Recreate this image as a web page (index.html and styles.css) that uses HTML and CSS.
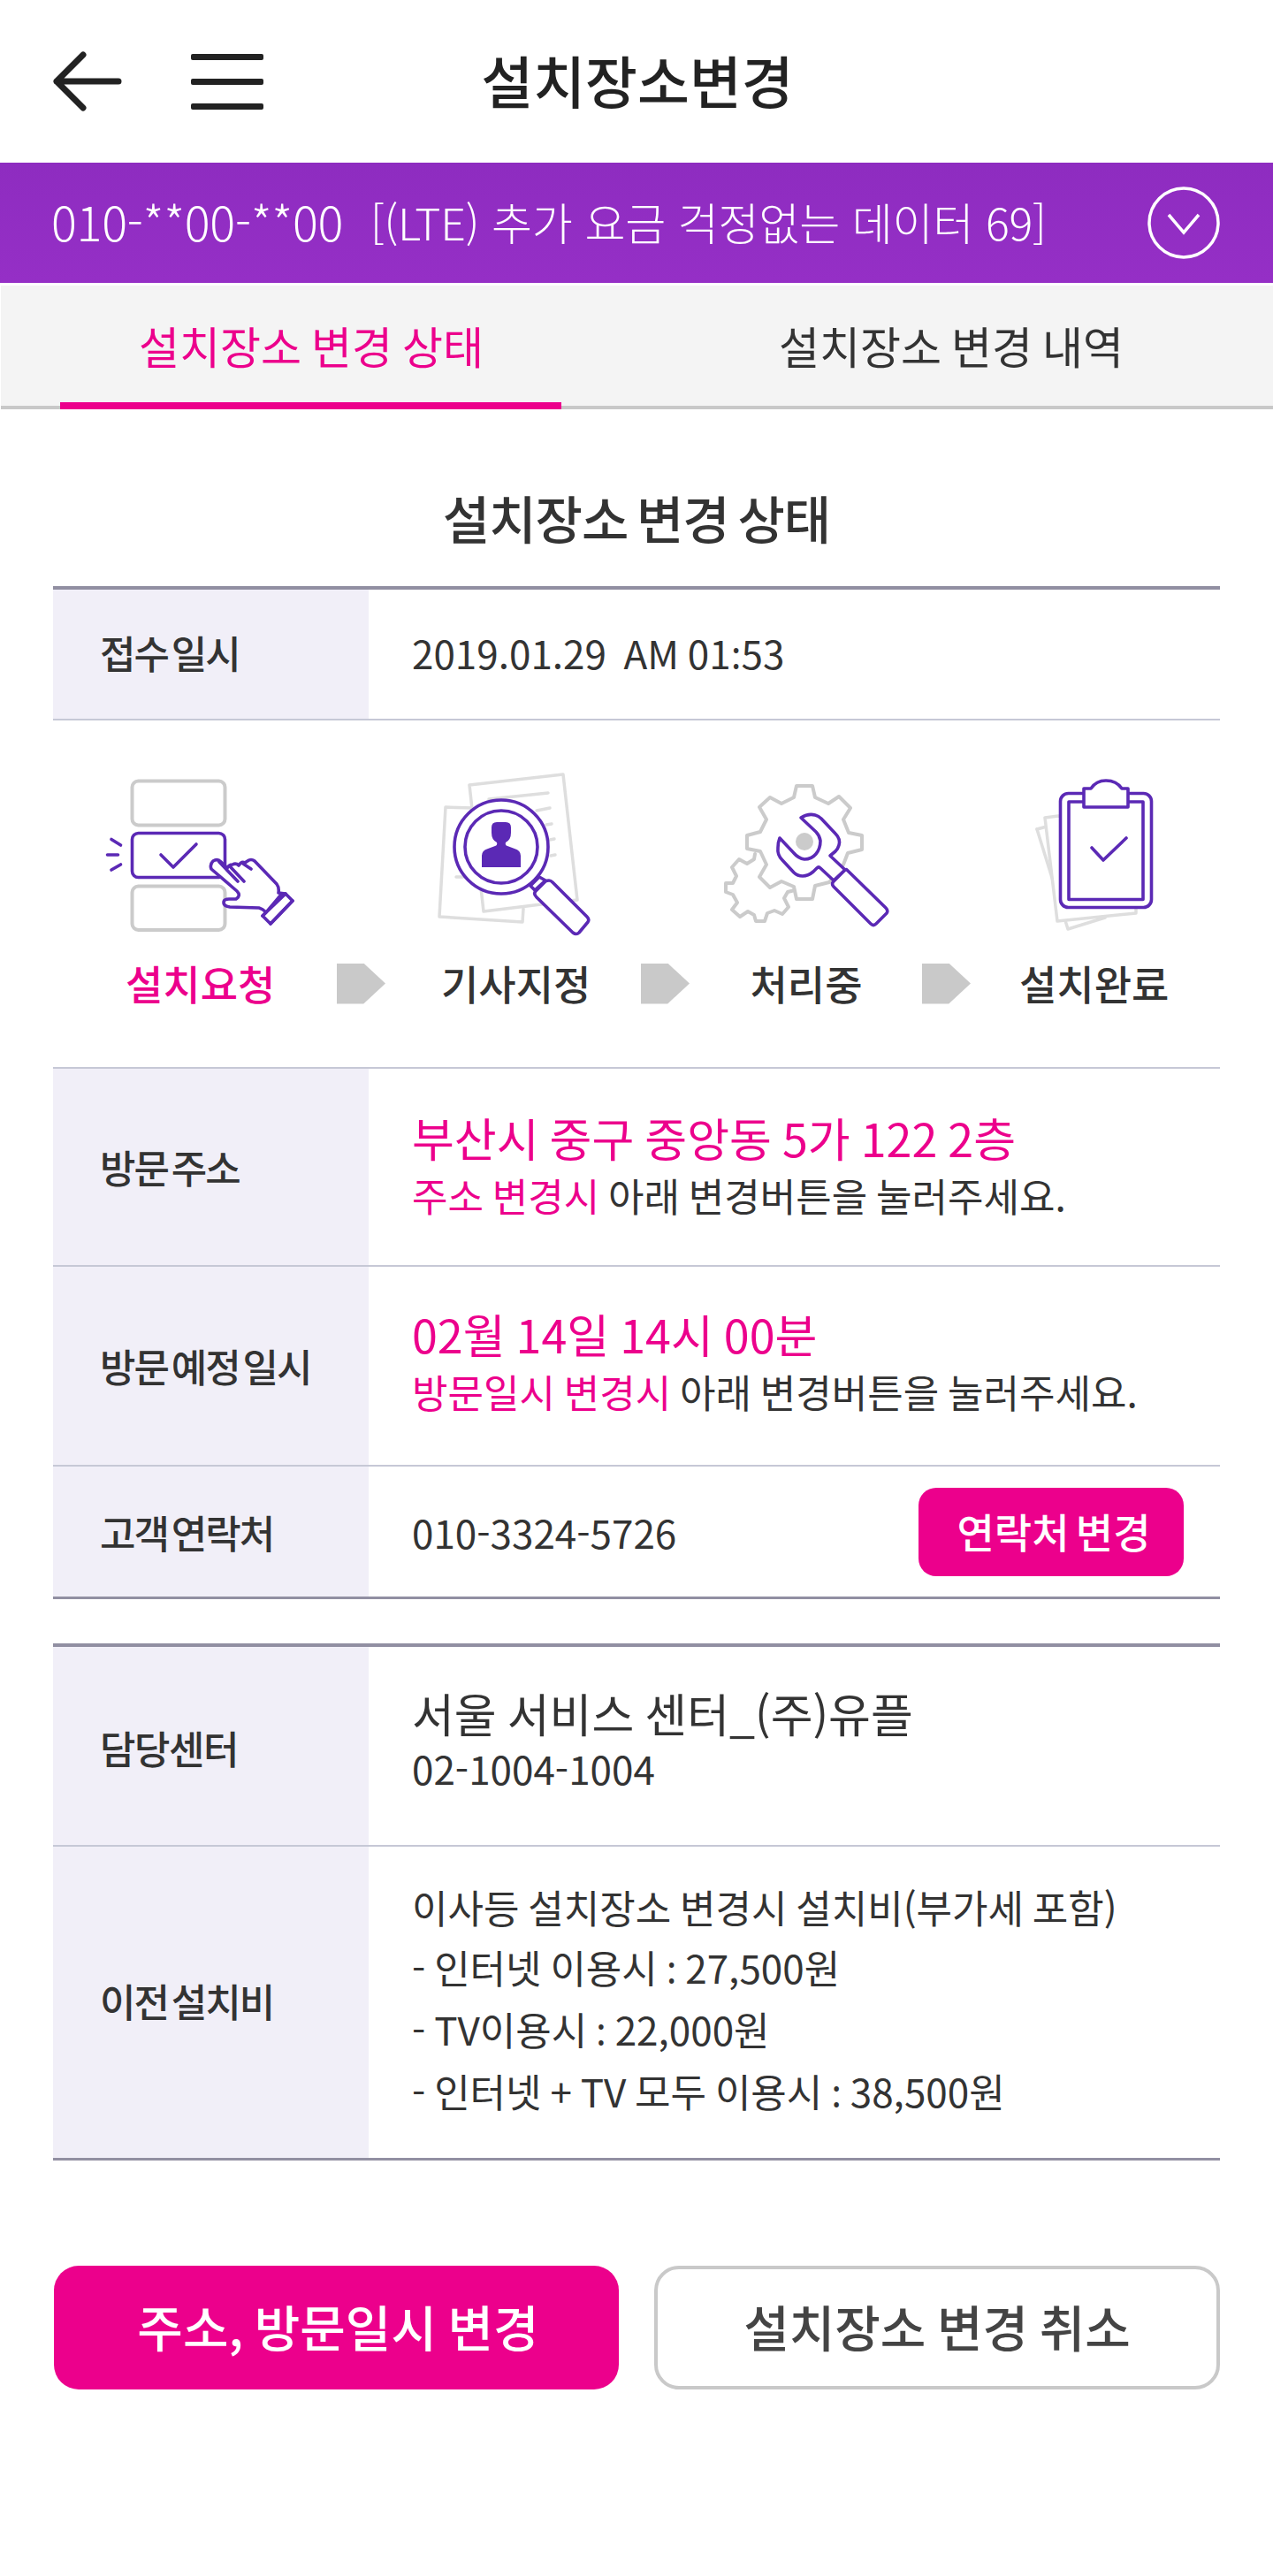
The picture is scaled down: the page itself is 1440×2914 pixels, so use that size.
FILE: index.html
```html
<!DOCTYPE html>
<html lang="ko">
<head>
<meta charset="utf-8">
<title>설치장소변경</title>
<link rel="stylesheet" href="styles.css">
</head>
<body>
<header class="topbar">
  <svg class="ico-back" viewBox="0 0 82 72"><path d="M76 36H6M36 6L6 36L36 66"/></svg>
  <svg class="ico-menu" viewBox="0 0 82 63"><rect y="0" width="82" height="7" rx="2"/><rect y="28" width="82" height="7" rx="2"/><rect y="56" width="82" height="7" rx="2"/></svg>
  <h1 class="page-title">설치장소변경</h1>
</header>
<div class="planbar">
  <span class="plan-num">010-**00-**00</span>
  <span class="plan-name">[(LTE) 추가 요금 걱정없는 데이터 69]</span>
  <svg class="ico-down" viewBox="0 0 82 82"><circle cx="41" cy="41" r="39"/><path d="M24 32L41 52L58 32"/></svg>
</div>
<nav class="tabs">
  <a class="tab tab-on">설치장소 변경 상태</a>
  <a class="tab tab-off">설치장소 변경 내역</a>
</nav>
<main class="content">
  <h2 class="sec-title">설치장소 변경 상태</h2>

  <section class="table">
    <div class="row row-date">
      <div class="th">접수 일시</div>
      <div class="td"><span>2019.01.29&nbsp; AM 01<span class="colon">:</span>53</span></div>
    </div>
    <div class="steps">
      <div class="step-icons">
        <svg class="si si1" viewBox="0 0 230 190">
          <g class="g-line">
            <rect x="39.5" y="13.5" width="105" height="50" rx="7"/>
            <rect x="39.5" y="132.5" width="105" height="49.5" rx="7"/>
          </g>
          <g class="p-line">
            <rect x="39.5" y="72.5" width="105" height="50" rx="7"/>
            <path d="M72 97L86 111L112 85M16 79.5L26.5 86M11.5 97H23.5M16 114L26.5 108"/>
            <path class="fw" d="M129 113Q127 108 131 104Q136 101 140 105L147 112Q149 108 153 108Q157 106 160 109Q163 104 167 106L170 104Q174 101 178 104L203 130Q206 134 205 140L213 141L221 149L196 175L187 166L191 162Q187 158 183 157L150 156Q143 155 143 151Q143 147 149 147L157 147Q163 143 158 138Z"/>
            <path d="M138 105L159 127M150 110L166 127M165 107L174 113M208 142L192 161M213 141L187 166M196 175L221 149"/>
          </g>
        </svg>
        <svg class="si si2" viewBox="0 0 190 190">
          <g class="lg-line">
            <path d="M45 44L14 43L7 167L101 173L102 158"/>
            <path class="fw" d="M41 18L147 6L163 148L57 161Z"/>
            <path d="M63 34L130 27M117 47L132 44M128 63L134 62M132 80L137 79M133 98L138 97M26 122H34"/>
          </g>
          <g class="p-line">
            <path class="fw" d="M120 122L110 132L115 137L127 126Z"/>
            <circle class="fw" cx="77" cy="88" r="53"/>
            <circle cx="77" cy="88" r="41"/>
            <path class="fw" d="M131 126Q133 126 135 128L174 167Q177 170 175 173L165 185Q162 188 158 185L117 145Q113 141 116 138L127 127Q129 126 131 126Z"/>
          </g>
          <path class="p-fill" d="M55 111V98Q55 92 62 90L70 87Q73 86 72 83Q66 80 66 72V66Q66 60 72 60H82Q88 60 88 66V72Q88 80 82 83Q81 86 84 87L92 90Q99 92 99 98V111Z"/>
        </svg>
        <svg class="si si3" viewBox="0 -5 200 190">
          <g class="g-line">
            <path d="M44 91L43 97L35 102L26 97L18 106L23 116L19 124L11 124V134L19 137L24 146L18 154L27 162L36 156L43 160L45 167H55L58 158L66 155L75 159L82 151L77 141L81 134L89 132"/>
            <path class="fw" d="M88 27L91 14H109L112 27L127 34L139 26L152 39L144 52L150 67L165 70V86L149 90L144 103L128 123L112 127L109 142H91L88 128L74 122L61 129L49 117L57 103L50 88L35 85V70L50 66L57 52L49 38L61 27L74 34Z"/>
          </g>
          <circle class="g-fill" cx="100" cy="77" r="10"/>
          <path class="p-line fw" d="M96 50Q104 45 112 47Q116 48 119 51L135 68Q141 74 139 81Q138 85 135 88L129 93L146 109L133 121L118 107Q116 105 114 107L110 111Q104 116 98 116Q92 116 88 112L75 98Q69 92 70 84Q70 78 72 73L88 90Q93 96 100 97Q108 97 113 91Q118 85 118 76Q117 70 113 66Z"/>
          <path class="p-line fw" d="M148 109L192 152Q195 155 193 158L181 170Q178 173 175 170L133 128Q130 125 133 122L145 110Q147 108 148 109Z"/>
        </svg>
        <svg class="si si4" viewBox="0 0 170 190">
          <g class="lg-line">
            <path d="M13 68L48 181L90 168"/>
            <path d="M13 68L24 65"/>
            <path class="fw" d="M22 55L37 53L125 70V163L36 172Z"/>
          </g>
          <g class="p-line">
            <rect class="fw" x="39.5" y="27.5" width="103" height="129" rx="9"/>
            <rect x="49" y="37" width="84" height="110.500"/>
            <path class="fw" d="M66 43V22H74Q80 13 91 13Q103 13 109 22H116V43Z"/>
            <path d="M75 89L88 103L114 78"/>
          </g>
        </svg>
      </div>
      <div class="step-labels">
        <span class="sl sl-on">설치요청</span>
        <i class="arw arw1"></i>
        <span class="sl">기사지정</span>
        <i class="arw arw2"></i>
        <span class="sl sl-3">처리중</span>
        <i class="arw arw3"></i>
        <span class="sl">설치완료</span>
      </div>
    </div>
    <div class="row row-addr">
      <div class="th">방문 주소</div>
      <div class="td">
        <p class="big pink">부산시 중구 중앙동 5가 122 2층</p>
        <p class="note"><span class="pink">주소 변경시</span> 아래 변경버튼을 눌러주세요.</p>
      </div>
    </div>
    <div class="row row-date2">
      <div class="th">방문 예정 일시</div>
      <div class="td">
        <p class="big pink">02월 14일 14시 00분</p>
        <p class="note"><span class="pink">방문일시 변경시</span> 아래 변경버튼을 눌러주세요.</p>
      </div>
    </div>
    <div class="row row-tel row-last">
      <div class="th">고객 연락처</div>
      <div class="td td-split">
        <span>010-3324-5726</span>
        <a class="mini-btn">연락처 변경</a>
      </div>
    </div>
  </section>

  <section class="table table-2">
    <div class="row row-center">
      <div class="th">담당센터</div>
      <div class="td">
        <p class="big">서울 서비스 센터_(주)유플</p>
        <p class="tel">02-1004-1004</p>
      </div>
    </div>
    <div class="row row-fee row-last">
      <div class="th">이전 설치비</div>
      <div class="td">
        <ul class="fee">
          <li>이사등 설치장소 변경시 설치비(부가세 포함)</li>
          <li>- 인터넷 이용시 <span class="colon">:</span> 27,500원</li>
          <li>- TV이용시 <span class="colon">:</span> 22,000원</li>
          <li>- 인터넷 + TV 모두 이용시 <span class="colon">:</span> 38,500원</li>
        </ul>
      </div>
    </div>
  </section>

  <div class="actions">
    <a class="btn btn-main">주소, 방문일시 변경</a>
    <a class="btn btn-sub">설치장소 변경 취소</a>
  </div>
</main>
</body>
</html>
```

FILE: styles.css
```css
* { box-sizing: border-box; }
html, body { margin: 0; padding: 0; background: #fff; }
body {
  font-family: "Noto Sans CJK KR", "Noto Sans", sans-serif;
  color: #333;
  width: 1440px;
  height: 2914px;
  overflow: hidden;
}
p, h1, h2, ul { margin: 0; padding: 0; list-style: none; font-weight: 400; }
.colon { font-family: "Noto Sans", sans-serif; }

.topbar { position: relative; height: 184px; display: flex; align-items: center; padding-left: 58px; }
.ico-back { width: 82px; height: 72px; display: block; }
.ico-back path { fill: none; stroke: #222; stroke-width: 7; stroke-linecap: round; stroke-linejoin: round; }
.ico-menu { width: 82px; height: 63px; margin-left: 76px; }
.ico-menu rect { fill: #222; }
.page-title { position: absolute; left: 2px; right: 0; top: 50px; text-align: center; font-size: 64px; line-height: 78px; font-weight: 500; color: #222; }

.planbar { height: 136px; background: linear-gradient(#8e2cc0, #952fc6); color: #fff; display: flex; align-items: center; padding: 0 60px 0 58px; font-weight: 300; }
.plan-num { width: 362px; font-size: 54px; letter-spacing: -0.3px; padding-bottom: 5px; }
.plan-name { flex: 1; font-size: 50px; letter-spacing: -0.2px; padding-bottom: 5px; margin-left: -1px; }
.ico-down { width: 82px; height: 82px; }
.ico-down circle, .ico-down path { fill: none; stroke: #fff; stroke-width: 3.5; }

.tabs { margin-top: 3px; height: 140px; margin-left: 1px; background: #f4f4f4; border-bottom: 4px solid #c8c8c8; display: flex; position: relative; }
.tab { font-size: 50px; line-height: 134px; text-align: center; color: #333; word-spacing: -3px; }
.tab-on { width: 702px; color: #ec008c; }
.tab-off { flex: 1; padding-left: 9px; }
.tab-on::after { content: ""; position: absolute; left: 67px; width: 567px; height: 8px; bottom: -4px; background: #ec008c; }

.content { padding: 0 60px; }
.sec-title { text-align: center; height: 200px; padding-top: 78px; font-size: 58px; line-height: 88px; font-weight: 500; color: #333; letter-spacing: -1px; word-spacing: -5.5px; }

.table { border-top: 4px solid #918fa2; }
.table-2 { margin-top: 50px; }
.row { display: flex; border-bottom: 2px solid #c6c8d6; }
.row-last { border-bottom: 3px solid #918fa2; }
.th { width: 357px; background: #f1eff8; padding-left: 53px; display: flex; align-items: center; font-size: 44px; font-weight: 500; color: #333; letter-spacing: -2px; word-spacing: -6.5px; }
.td { flex: 1; padding-left: 49px; font-size: 44px; color: #333; display: flex; flex-direction: column; justify-content: center; font-weight: 400; word-spacing: -2.5px; }
.td-split { flex-direction: row; align-items: center; justify-content: space-between; padding-right: 41px; }

.row-date { height: 148px; }
.row-date .td { padding-bottom: 5px; }
.row-date .th { padding-bottom: 4px; }
.row-addr { height: 224px; }
.row-addr .td { padding-bottom: 4px; }
.row-date2 { height: 226px; }
.row-date2 .td { padding-bottom: 10px; }
.row-tel { height: 150px; }
.row-center { height: 226px; }
.row-center .td { padding-bottom: 14px; }
.row-center .th { padding-top: 4px; letter-spacing: -1.5px; }
.row-fee { height: 355px; }
.row-fee .td { padding-bottom: 6px; }
.row-fee .th { padding-bottom: 4px; }

.pink { color: #ec008c; }
.big { font-size: 52px; line-height: 64px; }
.row-addr .big, .row-date2 .big { margin-bottom: 4px; }
.note { font-size: 44px; line-height: 58px; }
.tel { font-size: 44px; line-height: 60px; }
.fee li { line-height: 68px; }

.mini-btn { width: 300px; height: 100px; padding: 0 0 4px 6px; border-radius: 20px; background: #ec008c; color: #fff; font-size: 46px; font-weight: 500; word-spacing: -5.5px; display: flex; align-items: center; justify-content: center; }

.steps { height: 394px; border-bottom: 2px solid #c6c8d6; }
.step-icons { display: flex; padding-top: 55px; padding-left: 50px; }
.si { height: 190px; display: block; flex: none; }
.si1 { width: 230px; }
.si2 { width: 190px; margin-left: 150px; }
.si3 { width: 200px; margin-left: 130px; }
.si4 { width: 170px; margin-left: 150px; }
.g-line { fill: none; stroke: #cbcbcb; stroke-width: 4; stroke-linejoin: round; stroke-linecap: round; }
.lg-line { fill: none; stroke: #dedede; stroke-width: 3.5; stroke-linejoin: round; stroke-linecap: round; }
.p-line { fill: none; stroke: #5b29b5; stroke-width: 3.6; stroke-linejoin: round; stroke-linecap: round; }
.p-line.fw, .p-line .fw, .lg-line .fw, .g-line .fw { fill: #fff; }
.p-fill { fill: #5b29b5; }
.g-fill { fill: #cbcbcb; }
.step-labels { display: flex; align-items: center; padding-left: 82px; margin-top: 28px; }
.sl { width: 168px; padding-bottom: 3px; text-align: center; font-size: 46px; font-weight: 500; line-height: 46px; color: #333; white-space: nowrap; }
.sl-3 { width: 128px; }
.sl-on { color: #ec008c; }
.arw { display: block; width: 55px; height: 46px; background: #c9c9c9; clip-path: polygon(0 0, 55% 0, 100% 50%, 55% 100%, 0 100%); }
.arw1 { margin: 0 63px 0 71px; }
.arw2 { margin: 0 68px 0 58px; }
.arw3 { margin: 0 55px 0 67px; }

.actions { display: flex; justify-content: space-between; margin-top: 119px; padding-left: 1px; }
.btn { height: 140px; border-radius: 28px; padding-bottom: 5px; display: flex; align-items: center; justify-content: center; font-size: 56px; font-weight: 500; word-spacing: -3px; }
.btn-main { width: 639px; padding-left: 4px; background: #ec008c; color: #fff; }
.btn-sub { width: 640px; background: #fff; border: 4px solid #c9c9c9; color: #444; }
```
